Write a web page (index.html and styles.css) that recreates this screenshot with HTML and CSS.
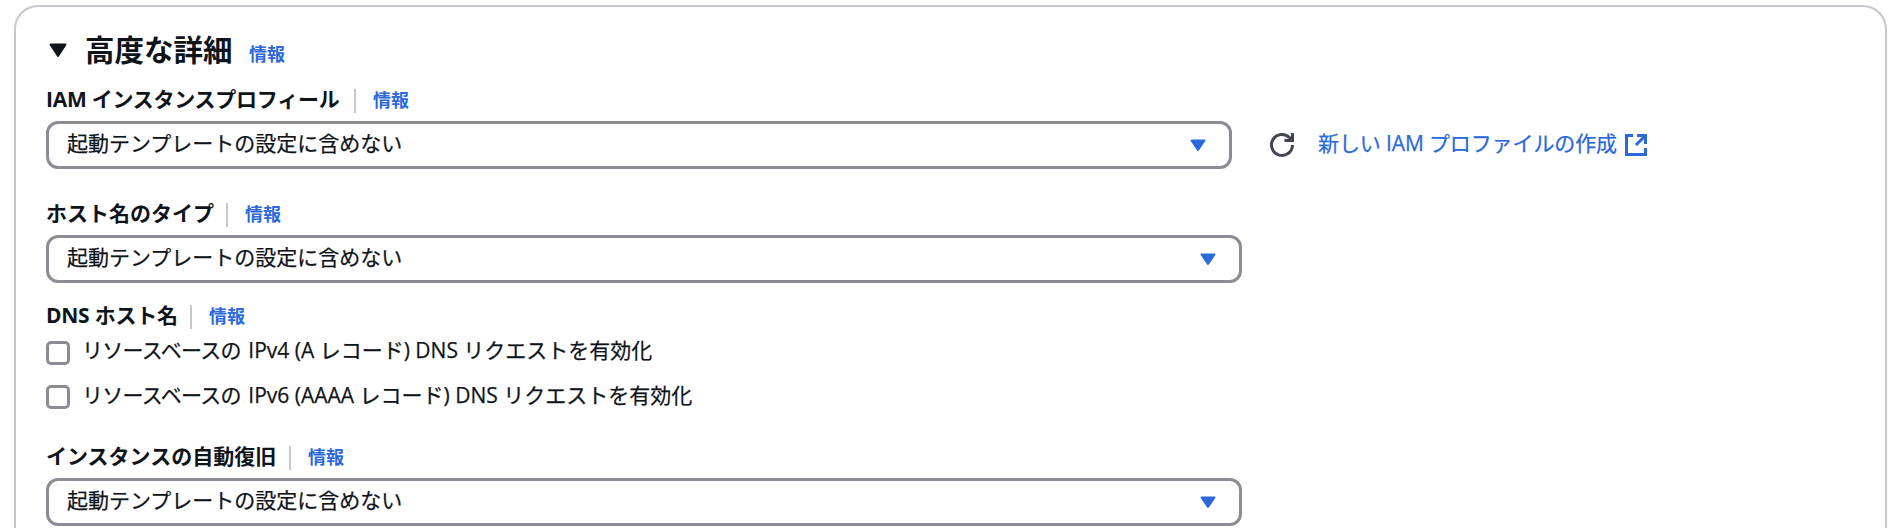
FILE: index.html
```
<!DOCTYPE html>
<html lang="ja">
<head>
<meta charset="utf-8">
<title>高度な詳細</title>
<link rel="stylesheet" href="styles.css">
</head>
<body>
<section class="panel">
  <header class="panel-header">
    <svg class="caret" width="18" height="15" viewBox="0 0 18 15"><path d="M1.5 1.5h15L9 13z" fill="#0f141a" stroke="#0f141a" stroke-width="2" stroke-linejoin="round"/></svg>
    <h2>高度な詳細</h2>
    <a class="info">情報</a>
  </header>

  <div class="field profile">
    <div class="label"><span class="label-text">IAM インスタンスプロフィール</span><a class="info">情報</a></div>
    <div class="row">
      <div class="select narrow"><span>起動テンプレートの設定に含めない</span><svg width="16" height="13" viewBox="0 0 16 13"><path d="M1.5 1.5h13L8 11z" fill="#2b68dc" stroke="#2b68dc" stroke-width="2" stroke-linejoin="round"/></svg></div>
      <svg class="refresh" width="26" height="26" viewBox="0 0 26 26" fill="none" stroke="#424650" stroke-width="3"><path d="M23.500 13A10.500 10.500 0 1 1 20.500 5.600L23.500 8.500"/><path d="M23.500 1v7.500h-8"/></svg>
      <a class="create"><span class="create-text">新しい IAM プロファイルの作成</span><svg width="22" height="22" viewBox="0 0 22 22" fill="none" stroke="#2b68dc" stroke-width="3"><path d="M8 1.500H1.500v19h19V14"/><path d="M12 1.500h8.500v8.500M20 2L11 11"/></svg></a>
    </div>
  </div>

  <div class="field host">
    <div class="label"><span class="label-text">ホスト名のタイプ</span><a class="info">情報</a></div>
    <div class="select"><span>起動テンプレートの設定に含めない</span><svg width="16" height="13" viewBox="0 0 16 13"><path d="M1.5 1.5h13L8 11z" fill="#2b68dc" stroke="#2b68dc" stroke-width="2" stroke-linejoin="round"/></svg></div>
  </div>

  <div class="field dns">
    <div class="label"><span class="label-text">DNS ホスト名</span><a class="info">情報</a></div>
    <label class="check"><span class="box"></span><span class="check-text"><span class="tight">リソースベースの</span> <span class="latin">IPv4 (A レコード) DNS リクエストを有効化</span></span></label>
    <label class="check"><span class="box"></span><span class="check-text"><span class="tight">リソースベースの</span> <span class="latin">IPv6 (AAAA レコード) DNS リクエストを有効化</span></span></label>
  </div>

  <div class="field recovery">
    <div class="label"><span class="label-text">インスタンスの自動復旧</span><a class="info">情報</a></div>
    <div class="select"><span>起動テンプレートの設定に含めない</span><svg width="16" height="13" viewBox="0 0 16 13"><path d="M1.5 1.5h13L8 11z" fill="#2b68dc" stroke="#2b68dc" stroke-width="2" stroke-linejoin="round"/></svg></div>
  </div>
</section>
</body>
</html>
```
FILE: styles.css
```
* { box-sizing: border-box; }
body {
  margin: 0;
  height: 528px;
  overflow: hidden;
  padding: 5px 15px 0 14px;
  background: #fff;
  color: #0f141a;
  font: 21px/24px "Open Sans", "Noto Sans CJK JP", sans-serif;
}
svg { display: block; flex: none; }
.panel {
  height: 523px;
  overflow: hidden;
  border: 2px solid #c6c6cd;
  border-bottom: 0;
  border-radius: 24px 24px 0 0;
  padding: 25px 30px 0;
}
.panel-header { display: flex; align-items: center; height: 38px; }
.caret { margin: -1px 0 0 3px; }
h2 { margin: -3px 0 0 18px; font-size: 29.5px; line-height: 38px; font-weight: 700; width: 148px; white-space: nowrap; }
.info { color: #2b68dc; font-size: 18px; font-weight: 700; }
.panel-header .info { margin: 5px 0 0 16px; }
.label { display: flex; align-items: center; height: 24px; font-weight: 700; margin-bottom: 8px; white-space: nowrap; }
.label-text { width: 180px; margin-top: -5px; }
.label .info { border-left: 2px solid #c6c6cd; padding-left: 17px; line-height: 22px; height: 24px; }
.field { margin-top: 19px; }
.profile .label-text { width: 308px; letter-spacing: -0.25px; }
.dns .label-text { width: 144px; letter-spacing: -0.25px; }
.recovery .label-text { width: 243px; }
.row { display: flex; align-items: center; }
.select {
  display: flex;
  align-items: center;
  justify-content: space-between;
  width: 1196px;
  height: 48px;
  border: 3px solid #8c8c94;
  border-radius: 12px;
  padding: 0 23px 0 18px;
}
.select.narrow { width: 1186px; }
.select span, .check-text, .create-text { -webkit-text-stroke: 0.25px currentColor; }
.select span { margin-top: -5px; }
.refresh { margin-left: 37px; }
.create { display: flex; align-items: center; margin-left: 23px; color: #2b68dc; white-space: nowrap; }
.create-text { margin-top: -5px; width: 299px; letter-spacing: -0.12px; }
.create svg { margin-left: 8px; }
.host { margin-top: 34px; }
.dns { margin-top: 22px; }
.dns .label { margin-bottom: 12px; }
.check { display: flex; height: 24px; white-space: nowrap; }
.check + .check { margin-top: 20px; }
.check + .check .check-text { margin-top: -2px; }
.box { width: 24px; height: 24px; border: 3px solid #8c8c94; border-radius: 5px; margin-right: 12px; }
.check-text { margin-top: -3px; }
.tight { letter-spacing: -0.7px; margin-right: 2px; }
.recovery { margin-top: 37px; }
```
